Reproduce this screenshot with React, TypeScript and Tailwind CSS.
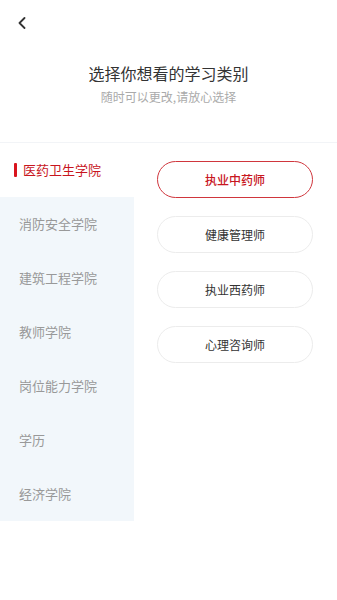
import { useState } from "react";

const colleges = [
  "医药卫生学院",
  "消防安全学院",
  "建筑工程学院",
  "教师学院",
  "岗位能力学院",
  "学历",
  "经济学院",
];

const majors = ["执业中药师", "健康管理师", "执业西药师", "心理咨询师"];

export default function App() {
  const [college, setCollege] = useState(0);
  const [major, setMajor] = useState(0);

  return (
    <div
      className="min-h-[600px] w-full bg-white"
      style={{ fontFamily: '"Noto Sans CJK SC", "Noto Sans", sans-serif' }}
    >
      {/* 头部 */}
      <div className="h-[143px] border-b border-[#f2f4f7]">
        <div className="pl-[17px] pt-[17px]">
          <svg width="10" height="12" viewBox="0 0 10 12" fill="none">
            <path d="M7.5 1 L2.5 6 L7.5 11" stroke="#333" strokeWidth="1.8" strokeLinecap="round" strokeLinejoin="round" />
          </svg>
        </div>
        <div className="mt-[32px] text-center text-[16px] leading-[24px] text-[#333]">
          选择你想看的学习类别
        </div>
        <div className="mt-[3px] text-center text-[12px] leading-[18px] text-[#aaa]">
          随时可以更改,请放心选择
        </div>
      </div>

      <div className="flex">
        {/* 学院列表 */}
        <div className="w-[134px]">
          {colleges.map((c, i) =>
            i === college ? (
              <div
                key={c}
                className="flex h-[54px] items-center bg-white pl-[14px]"
                onClick={() => setCollege(i)}
              >
                <span className="h-[14px] w-[3px] rounded-[1px] bg-[#d9141e]" />
                <span className="ml-[6px] text-[13px] text-[#c8161e]">{c}</span>
              </div>
            ) : (
              <div
                key={c}
                className="flex h-[54px] items-center bg-[#f2f7fb] pl-[19px] text-[13px] text-[#999]"
                onClick={() => setCollege(i)}
              >
                {c}
              </div>
            )
          )}
        </div>

        {/* 专业 */}
        <div className="flex flex-1 flex-col gap-[18px] pl-[23px] pt-[18px]">
          {majors.map((m, i) => (
            <button
              key={m}
              onClick={() => setMajor(i)}
              className={`flex h-[37px] w-[156px] items-center justify-center rounded-full border text-[12px] ${
                i === major
                  ? "border-[#d0363d] font-medium text-[#c8161e]"
                  : "border-[#ececec] text-[#333]"
              }`}
            >
              {m}
            </button>
          ))}
        </div>
      </div>
    </div>
  );
}
